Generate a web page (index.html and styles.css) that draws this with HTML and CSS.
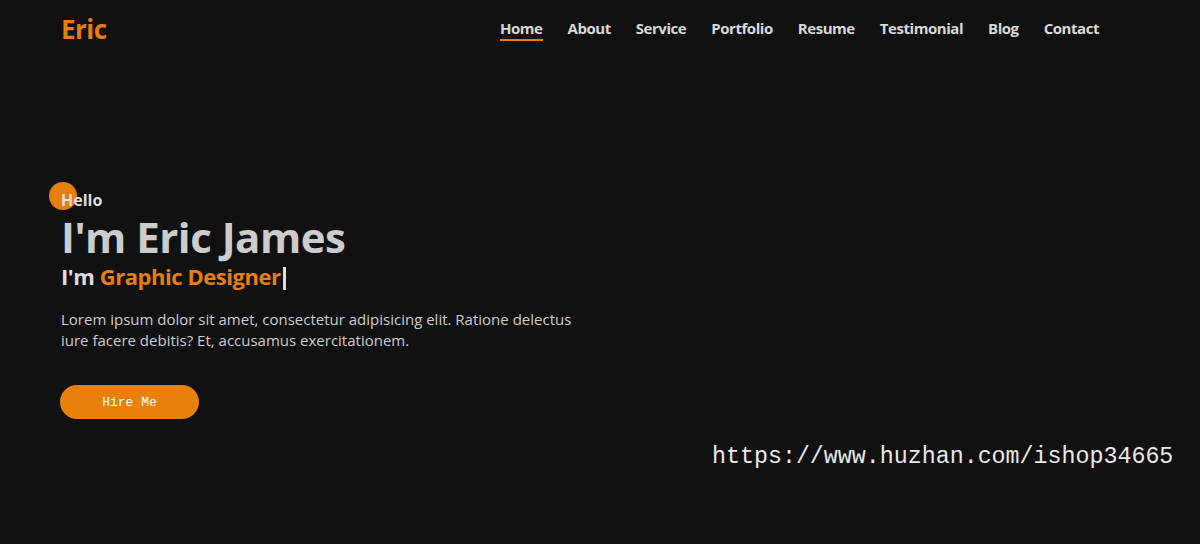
FILE: index.html
```html
<!DOCTYPE html>
<html lang="en">
<head>
<meta charset="utf-8">
<title>Eric - Portfolio</title>
<link rel="stylesheet" href="styles.css">
</head>
<body>
  <header class="header">
    <a class="logo" href="#">Eric</a>
    <nav class="nav">
      <a class="active" href="#">Home</a>
      <a href="#">About</a>
      <a href="#">Service</a>
      <a href="#">Portfolio</a>
      <a href="#">Resume</a>
      <a href="#">Testimonial</a>
      <a href="#">Blog</a>
      <a href="#">Contact</a>
    </nav>
  </header>

  <section class="hero">
    <h3 class="hello"><span class="dot"></span>Hello</h3>
    <h1 class="name">I'm Eric James</h1>
    <h2 class="role">I'm <span class="typed">Graphic Designer</span><span class="caret"></span></h2>
    <p class="intro">Lorem ipsum dolor sit amet, consectetur adipisicing elit. Ratione delectus iure facere debitis? Et, accusamus exercitationem.</p>
    <button class="btn">Hire Me</button>
  </section>

  <div class="mark">https://www.huzhan.com/ishop34665</div>
</body>
</html>
```

FILE: styles.css
```css
html { height: 100%; }
body { margin: 0; height: 544px; background: #111; color: #ccc; font-family: "Open Sans", "Noto Sans", sans-serif; position: relative; overflow: hidden; }
a { text-decoration: none; }

.header { display: flex; align-items: center; justify-content: space-between; padding: 12px 101px 0 61px; height: 34px; }
.logo { color: #e67e10; font-size: 26px; font-weight: 700; letter-spacing: -0.5px; }
.nav { display: flex; gap: 25px; }
.nav a { color: #d8d8d8; font-size: 15px; font-weight: 700; letter-spacing: -0.45px; padding-bottom: 1px; border-bottom: 2px solid transparent; }
.nav a.active { border-bottom-color: #e67e10; }

.hero { padding: 143px 0 0 61px; width: 530px; }
.hello { position: relative; z-index: 1; isolation: isolate; margin: 0; font-size: 16px; font-weight: 700; color: #ddd; line-height: 22px; }
.hello .dot { position: absolute; left: -12px; top: -7px; width: 28px; height: 28px; border-radius: 50%; background: #e67e10; z-index: -1; }
.name { margin: 0; font-size: 42px; font-weight: 700; color: #ccc; line-height: 52px; letter-spacing: -0.5px; }
.role { margin: 0; font-size: 22px; font-weight: 700; color: #ddd; line-height: 26px; letter-spacing: -0.45px; }
.typed { color: #e67e10; }
.caret { display: inline-block; width: 3px; height: 23px; background: #ddd; vertical-align: -5px; margin-left: 2px; }
.intro { margin: 19px 0 0; font-size: 15px; line-height: 21px; color: #ccc; }
.btn { margin-top: 34px; margin-left: -1px; width: 139px; height: 34px; border: none; border-radius: 17px; background: #e8800c; color: #fff; font-family: "Liberation Mono", monospace; font-size: 13px; cursor: pointer; }

.mark { position: absolute; left: 712px; top: 444px; font-family: "Liberation Mono", monospace; font-size: 23.3px; color: #e8e8e8; }
```
